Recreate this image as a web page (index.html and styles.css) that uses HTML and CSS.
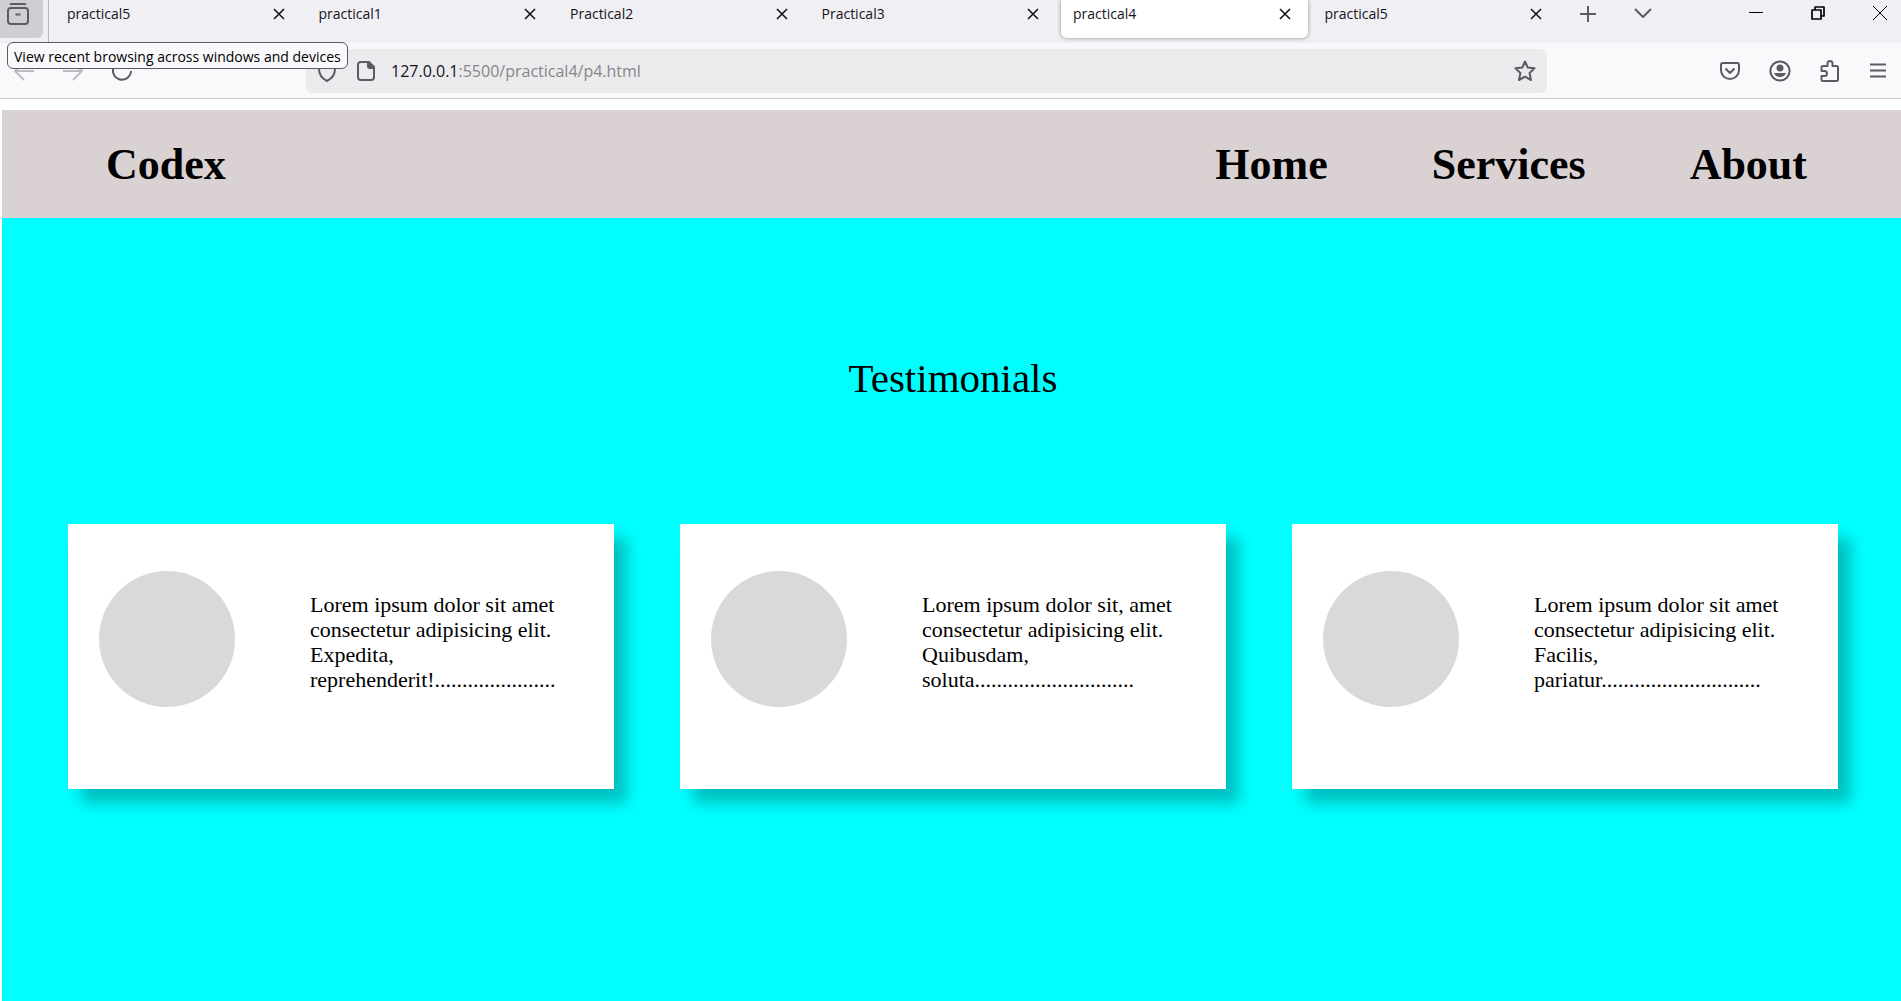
FILE: index.html
```html
<!DOCTYPE html>
<html lang="en">
<head>
<meta charset="utf-8">
<title>practical4</title>
<link rel="stylesheet" href="styles.css">
</head>
<body>
<svg class="defs" aria-hidden="true">
  <symbol id="close" viewBox="0 0 12 12"><path d="M1 1l10 10M11 1L1 11"/></symbol>
</svg>
<div class="browser">
  <div class="tabbar">
    <button class="recent" aria-label="View recent browsing" aria-describedby="tip">
      <svg width="22" height="22" viewBox="0 0 22 22"><rect x="1" y="5" width="20" height="16" rx="3"/><path d="M3 1.500Q3.500 1 5 1H17Q18.500 1 19 1.500M8.500 11.500h5"/></svg>
    </button>
    <div class="tabs">
      <div class="tab"><span>practical5</span><button aria-label="Close tab"><svg><use href="#close"/></svg></button></div>
      <div class="tab"><span>practical1</span><button aria-label="Close tab"><svg><use href="#close"/></svg></button></div>
      <div class="tab"><span>Practical2</span><button aria-label="Close tab"><svg><use href="#close"/></svg></button></div>
      <div class="tab"><span>Practical3</span><button aria-label="Close tab"><svg><use href="#close"/></svg></button></div>
      <div class="tab active"><span>practical4</span><button aria-label="Close tab"><svg><use href="#close"/></svg></button></div>
      <div class="tab"><span>practical5</span><button aria-label="Close tab"><svg><use href="#close"/></svg></button></div>
    </div>
    <div class="tabtools">
      <button aria-label="New tab"><svg width="16" height="16" viewBox="0 0 16 16"><path d="M8 0v16M0 8h16"/></svg></button>
      <button aria-label="List all tabs"><svg width="18" height="16" viewBox="0 0 18 16"><path d="M1 3l8 8 8-8"/></svg></button>
    </div>
    <div class="window">
      <button aria-label="Minimize"><svg width="14" height="14" viewBox="0 0 14 14"><path d="M0 6.500h14"/></svg></button>
      <button aria-label="Restore"><svg width="14" height="14" viewBox="0 0 14 14"><path d="M1 4h9v9H1zM4 4V1h9v9h-3" stroke-width="1.700"/></svg></button>
      <button aria-label="Close window"><svg width="14" height="14" viewBox="0 0 14 14"><path d="M0 0l14 14M14 0L0 14"/></svg></button>
    </div>
  </div>
  <div class="toolbar">
    <div class="history">
      <button class="off" aria-label="Back"><svg width="20" height="20" viewBox="0 0 20 20"><path d="M20 10H1M10 1L1 10l9 9"/></svg></button>
      <button class="off" aria-label="Forward"><svg width="20" height="20" viewBox="0 0 20 20"><path d="M0 10h19M10 1l9 9-9 9"/></svg></button>
      <button aria-label="Reload"><svg width="20" height="20" viewBox="0 0 20 20"><path d="M17 4A9 9 0 1 0 19 10M18 0v5h-5"/></svg></button>
    </div>
    <div class="address">
      <svg width="20" height="22" viewBox="0 0 20 22"><path d="M10 1L18 4V9Q18 17 10 21Q2 17 2 9V4z"/></svg>
      <svg width="18" height="20" viewBox="0 0 18 20"><path d="M4 1h8l5 5v10q0 3-3 3H4q-3 0-3-3V4q0-3 3-3z"/><path d="M11 1v4q0 2 2 2h4z" fill="currentColor"/></svg>
      <div class="url">127.0.0.1<span>:5500/practical4/p4.html</span></div>
      <button aria-label="Bookmark this page"><svg width="22" height="22" viewBox="0 0 22 22"><path d="M11 1.500L13.700 7.500 20.500 8.300 15.600 13 17 20 11 16.700 5 20 6.400 13 1.500 8.300 8.300 7.500z"/></svg></button>
    </div>
    <div class="actions">
      <button aria-label="Save to Pocket"><svg width="20" height="20" viewBox="0 0 20 20"><path d="M3 2h14q2 0 2 2v5a9 9 0 0 1-18 0V4q0-2 2-2zM5.500 7.500L10 12l4.500-4.500"/></svg></button>
      <button aria-label="Account"><svg width="22" height="22" viewBox="0 0 22 22"><circle cx="11" cy="11" r="9.600"/><circle cx="11" cy="8" r="3.500" class="solid"/><path class="solid" d="M5 13h12q-1.500 4-6 4t-6-4z"/></svg></button>
      <button aria-label="Extensions"><svg width="20" height="22" viewBox="0 0 20 22"><path d="M3 6h4.500V3.500a2.500 2.500 0 0 1 5 0V6h4q1.500 0 1.500 1.500V19.500q0 1.500-1.500 1.500H3q-1.500 0-1.500-1.500V16H4.500a2.500 2.500 0 0 0 0-5H1.500V7.500Q1.500 6 3 6z"/></svg></button>
      <button aria-label="Menu"><svg width="18" height="18" viewBox="0 0 18 18"><path d="M1 2.500h16M1 8.500h16M1 14.500h16"/></svg></button>
    </div>
  </div>
  <div class="tip" id="tip" role="tooltip">View recent browsing across windows and devices</div>
</div>
<div class="page">
  <nav class="nav">
    <a href="#" class="brand">Codex</a>
    <a href="#">Home</a>
    <a href="#">Services</a>
    <a href="#">About</a>
  </nav>
  <main class="main">
    <h1>Testimonials</h1>
    <div class="cards">
      <article class="card"><div class="avatar"></div><p>Lorem ipsum dolor sit amet consectetur adipisicing elit. Expedita, reprehenderit!......................</p></article>
      <article class="card"><div class="avatar"></div><p>Lorem ipsum dolor sit, amet consectetur adipisicing elit. Quibusdam, soluta.............................</p></article>
      <article class="card"><div class="avatar"></div><p>Lorem ipsum dolor sit amet consectetur adipisicing elit. Facilis, pariatur.............................</p></article>
    </div>
  </main>
</div>
</body>
</html>
```
FILE: styles.css
```css
* { box-sizing: border-box; }

body {
  display: flex;
  flex-direction: column;
  min-height: 100vh;
  margin: 0;
  background: #fff;
  color: #000;
  font-family: "Liberation Serif", "Times New Roman", serif;
}

.defs { display: none; }

svg {
  display: block;
  flex: none;
  fill: none;
  stroke: currentColor;
  stroke-width: 2;
  stroke-linejoin: round;
}

button {
  display: grid;
  place-items: center;
  padding: 0;
  border: 0;
  background: none;
  color: inherit;
}

/* Browser chrome */
.browser {
  position: relative;
  color: #5b5b66;
  font-family: "Open Sans", "Noto Sans", sans-serif;
  font-size: 14px;
}

.tabbar {
  display: flex;
  height: 43px;
  background: #f0eff4;
}

.recent {
  width: 43px;
  height: 38px;
  padding: 0 7px 10px 0;
  border-radius: 0 0 6px 0;
  background: #cfced3;
}

.tabs {
  display: flex;
  flex: 1;
  gap: 5px;
  max-width: 1511px;
  margin-left: 5px;
  padding-left: 6px;
  border-left: 1px solid #b9b8bf;
}

.tab {
  display: flex;
  flex: 1;
  align-items: center;
  justify-content: space-between;
  height: 38px;
  padding: 0 17px 11px 12px;
  border-radius: 0 0 6px 6px;
  color: #15141a;
}

.tab.active {
  background: #fff;
  box-shadow: 0 0 4px #00000066;
}

.tab svg { width: 12px; height: 12px; stroke-width: 1.6; }

.tabtools,
.window {
  display: flex;
  height: 27px;
}

.tabtools { gap: 38px; margin-left: 21px; }

.window {
  gap: 48px;
  margin-left: auto;
  padding-right: 14px;
  padding-bottom: 1px;
  color: #000;
}

.window svg { stroke-width: 1; }

.toolbar {
  display: flex;
  align-items: center;
  height: 56px;
  padding: 0 14px;
  border-bottom: 1px solid #ccc;
  background: #f9f9fb;
}

.history {
  display: flex;
  gap: 29px;
  width: 292px;
}

.off { color: #bcbcc2; }

.address {
  display: flex;
  flex: 1;
  align-items: center;
  max-width: 1241px;
  height: 44px;
  padding: 0 11px;
  border-radius: 6px;
  background: #ebebed;
}

.address > svg + svg { margin-left: 20px; }

.url {
  flex: 1;
  margin-left: 16px;
  color: #15141a;
  font-size: 16px;
}

.url span { color: #86868a; }

.actions {
  display: flex;
  gap: 29px;
  margin-left: auto;
}

.tip {
  position: absolute;
  top: 42px;
  left: 7px;
  padding: 2px 6px 0;
  border: 1px solid #5b5b66;
  border-radius: 6px;
  background: #f9f9fb;
  color: #000;
  line-height: 23px;
  white-space: nowrap;
}

.solid { fill: currentColor; stroke: none; }

/* Web page */
.page {
  display: flex;
  flex: 1;
  flex-direction: column;
  margin: 11px 0 0 2px;
}

.nav {
  display: flex;
  gap: 104px;
  align-items: center;
  height: 108px;
  padding: 0 94px 0 104px;
  background: #dad2d2;
  font-size: 44px;
  font-weight: bold;
}

.nav a { color: #000; text-decoration: none; }
.brand { margin-right: auto; }

.main {
  flex: 1;
  padding: 136px 63px 60px 66px;
  background: #0ff;
}

h1 {
  margin: 0 0 122px;
  font-size: 41px;
  font-weight: normal;
  line-height: 48px;
  text-align: center;
}

.cards {
  display: grid;
  grid-template-columns: repeat(3, 1fr);
  gap: 66px;
}

.card {
  display: flex;
  gap: 75px;
  align-items: center;
  min-height: 265px;
  padding: 0 54px 35px 31px;
  background: #fff;
  box-shadow: 13px 14px 14px #00000040;
}

.avatar {
  flex: none;
  width: 136px;
  height: 136px;
  border-radius: 50%;
  background: #d9d9d9;
}

.card p {
  flex: 1;
  margin: 0;
  padding-top: 6px;
  font-size: 22px;
  line-height: 25px;
}
```
